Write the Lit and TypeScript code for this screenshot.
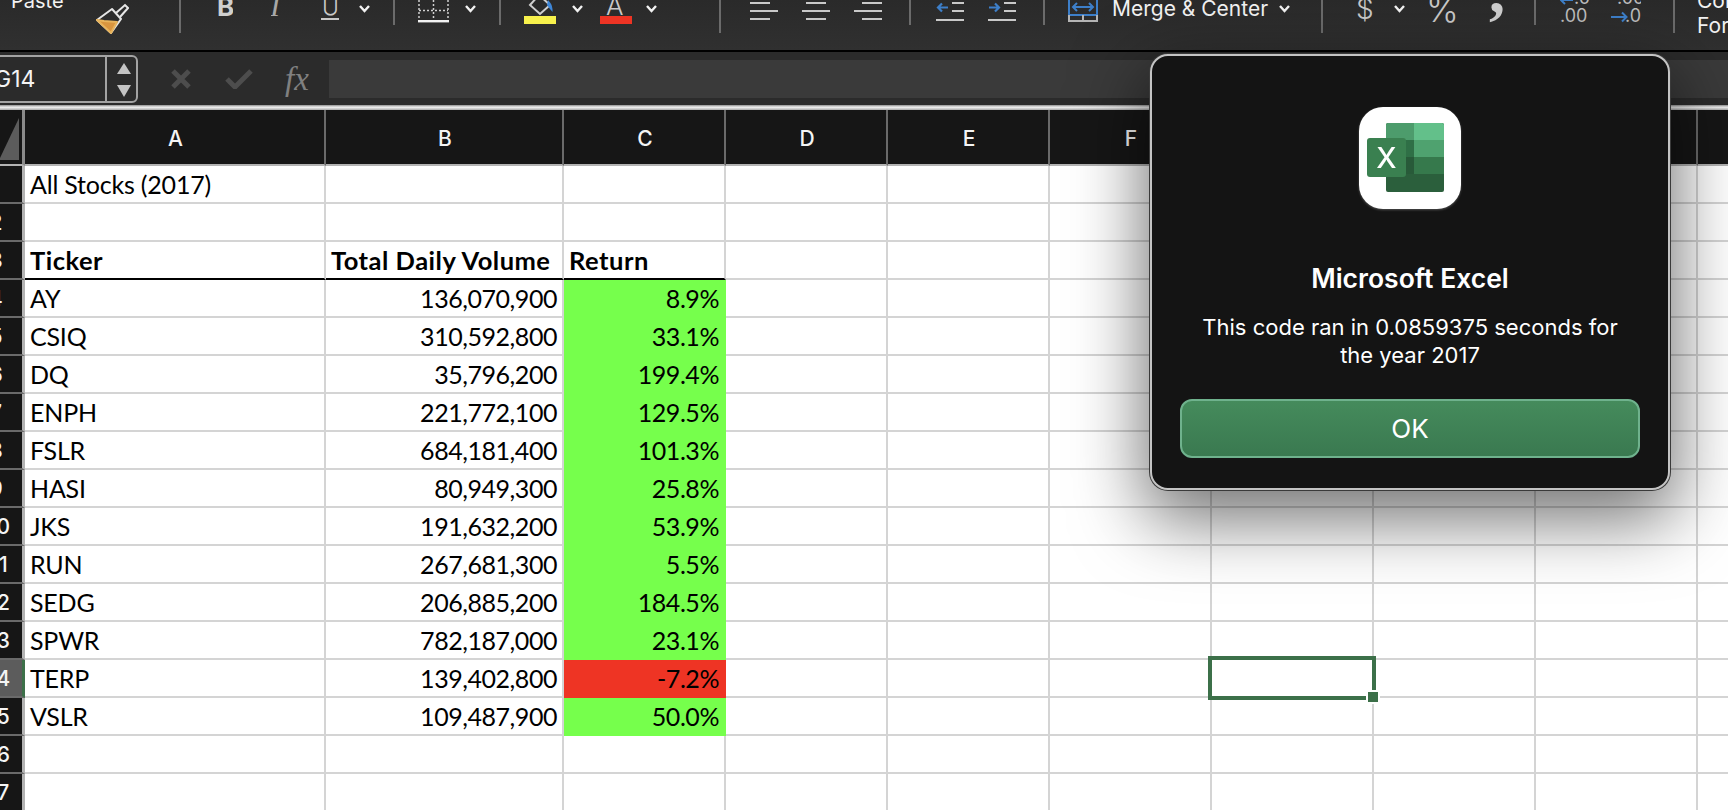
import { LitElement, html, css, svg } from "lit";
import { customElement } from "lit/decorators.js";

const COLS = ["A", "B", "C", "D", "E", "F", "G", "H", "I", "J"];
const ROW_COUNT = 17;

type Stock = [string, string, string];
const STOCKS: Stock[] = [
  ["AY", "136,070,900", "8.9%"],
  ["CSIQ", "310,592,800", "33.1%"],
  ["DQ", "35,796,200", "199.4%"],
  ["ENPH", "221,772,100", "129.5%"],
  ["FSLR", "684,181,400", "101.3%"],
  ["HASI", "80,949,300", "25.8%"],
  ["JKS", "191,632,200", "53.9%"],
  ["RUN", "267,681,300", "5.5%"],
  ["SEDG", "206,885,200", "184.5%"],
  ["SPWR", "782,187,000", "23.1%"],
  ["TERP", "139,402,800", "-7.2%"],
  ["VSLR", "109,487,900", "50.0%"],
];

// chevron drawn at the given x inside a toolbar icon
const chev = (x: number) =>
  svg`<polyline points="${x + 1},6 ${x + 5.5},11 ${x + 10},6" fill="none" stroke="#f2f2f2" stroke-width="2.4"/>`;

const lines = (xs: [number, number][]) =>
  xs.map(
    ([a, b], i) =>
      svg`<rect x="${a}" y="${2 + i * 8}" width="${b - a}" height="2" fill="#c9c9c9"/>`
  );

const indent = (flip: boolean) => svg`
  <svg class="icon" width="28" height="30">
    ${flip
      ? svg`<path d="M1 7.5H11M7 3.5L11 7.5L7 11.5" fill="none" stroke="#3d7fc9" stroke-width="2.2"/>`
      : svg`<path d="M12 7.5H2M6 3.5L2 7.5L6 11.5" fill="none" stroke="#3d7fc9" stroke-width="2.2"/>`}
    <rect x="16" y="2" width="12" height="2" fill="#c9c9c9"/>
    <rect x="16" y="10" width="12" height="2" fill="#c9c9c9"/>
    <rect y="19" width="28" height="2" fill="#c9c9c9"/>
  </svg>`;

@customElement("app-root")
export class AppRoot extends LitElement {
  static styles = css`
    :host {
      display: block;
      position: relative;
      width: 1728px;
      height: 810px;
      overflow: hidden;
      background: #fff;
      font-family: Inter, "Liberation Sans", sans-serif;
    }
    .icon {
      display: block;
      flex: none;
    }
    .icon text {
      font-family: Inter, "Liberation Sans", sans-serif;
    }
    .icon text.serif {
      font-family: "Liberation Serif", serif;
    }

    .toolbar {
      display: flex;
      align-items: flex-start;
      height: 50px;
      overflow: hidden;
      background: linear-gradient(#2a2a2a, #303030);
      border-bottom: 2px solid #000;
    }
    .group {
      display: flex;
      align-items: flex-start;
      flex: none;
      box-sizing: border-box;
    }
    .g1 { width: 179px; padding-left: 11px; gap: 31px; }
    .g2 { width: 212px; padding-left: 36px; gap: 38px; }
    .g3 { width: 104px; padding-left: 23px; }
    .g4 { width: 218px; padding-left: 23px; gap: 17px; }
    .g5 { width: 188px; padding-left: 29px; gap: 24px; }
    .g6 { width: 132px; padding-left: 25px; gap: 24px; }
    .g7 { width: 276px; padding-left: 23px; gap: 14px; }
    .g8 { width: 211px; padding-left: 33px; gap: 19px; }
    .g9 { width: 137px; padding-left: 24px; gap: 21px; }
    .g10 { width: 53px; padding-left: 22px; }
    .sep {
      flex: none;
      width: 2px;
      height: 33px;
      background: #6b6b6b;
    }
    .sep.short { height: 25px; }
    .label {
      color: #f2f2f2;
      font-size: 21px;
      line-height: 24px;
      white-space: nowrap;
    }
    .paste {
      width: 54px;
      margin-top: -11px;
      font-size: 20px;
    }
    .merge {
      display: flex;
      gap: 11px;
      margin-top: -3px;
    }
    .merge .icon { margin-top: 3px; }
    .cond {
      margin-top: -12px;
      line-height: 25px;
    }

    .formula {
      display: flex;
      align-items: center;
      height: 53px;
      background: #2b2b2b;
    }
    .namebox {
      display: flex;
      flex: none;
      box-sizing: border-box;
      width: 150px;
      height: 48px;
      margin-left: -12px;
      border: 2px solid #a3a3a3;
      border-radius: 6px;
      color: #f4f4f4;
      font-size: 23px;
      line-height: 44px;
    }
    .ref {
      flex: 1;
      padding-left: 4px;
    }
    .spin {
      display: flex;
      flex-direction: column;
      align-items: center;
      justify-content: space-between;
      box-sizing: border-box;
      width: 31px;
      padding: 6px 0 4px 4px;
      border-left: 2px solid #a3a3a3;
    }
    .actions {
      display: flex;
      align-items: center;
      flex: none;
      margin-left: 33px;
      margin-right: 15px;
      gap: 34px;
    }
    .fx {
      width: 29px;
      margin-left: -2px;
      color: #808080;
      font: italic 33px/40px "Liberation Serif", serif;
    }
    .input {
      flex: 1;
      height: 38px;
      background: #3a3a3a;
    }
    .rule {
      height: 5px;
      background: linear-gradient(#8f8f8f, #f0f0f0 45%, #a8a8a8);
    }

    .row {
      display: flex;
      width: max-content;
      height: 38px;
    }
    .row.head {
      height: 56px;
    }
    .rownum {
      display: flex;
      align-items: center;
      justify-content: center;
      flex: none;
      box-sizing: border-box;
      width: 52px;
      margin-left: -27px;
      padding-right: 3px;
      background: #161616;
      border-right: 3px solid #b3b3b3;
      border-bottom: 2px solid #6a6a6a;
      color: #f4f4f4;
      font-size: 21px;
      font-weight: 500;
    }
    .rownum.wide {
      padding-left: 6px;
    }
    .rownum.sel {
      background: #5c5c5c;
      border-right-color: #3c7049;
    }
    .corner {
      align-items: flex-end;
      justify-content: flex-end;
      padding: 0 3px 4px 0;
      border-right-color: #8a8a8a;
      border-bottom-color: #b3b3b3;
    }
    .colhead {
      display: flex;
      align-items: center;
      justify-content: center;
      flex: none;
      box-sizing: border-box;
      padding: 3px 0 0 2px;
      background: #161616;
      border-right: 2px solid #6a6a6a;
      border-bottom: 2px solid #b3b3b3;
      color: #f4f4f4;
      font-size: 21px;
      font-weight: 500;
    }
    .cell {
      flex: none;
      box-sizing: border-box;
      padding: 0 5px;
      border-right: 2px solid #d4d4d4;
      border-bottom: 2px solid #d4d4d4;
      color: #000;
      font: 25px/36px Lato, "Liberation Sans", sans-serif;
      letter-spacing: -0.2px;
      white-space: nowrap;
    }
    .w-a { width: 301px; }
    .w-b { width: 238px; }
    .w-n { width: 162px; }
    .cell.bold {
      font-size: 25.500px;
      font-weight: 700;
      letter-spacing: 0.5px;
    }
    .cell.num {
      text-align: right;
      letter-spacing: -0.45px;
    }
    .cell.under { border-bottom-color: #000; }
    .cell.up { background: #76ff4c; border-color: #76ff4c; }
    .cell.down { background: #ee3424; border-color: #ee3424; }
    .cell.active {
      position: relative;
      z-index: 1;
    }
    .selection {
      position: absolute;
      inset: -4px;
      border: 4px solid #3c7049;
    }
    .handle {
      position: absolute;
      right: -6px;
      bottom: -6px;
      width: 10px;
      height: 10px;
      background: #3c7049;
      box-shadow: 0 0 0 2px #fff;
    }

    .dialog {
      position: absolute;
      z-index: 2;
      left: 1150px;
      top: 54px;
      display: flex;
      flex-direction: column;
      align-items: center;
      box-sizing: border-box;
      width: 520px;
      height: 436px;
      padding: 51px 28px 0;
      background: #141414;
      border: 2px solid #c4c4c4;
      border-radius: 18px;
      box-shadow: 0 0 0 1px #3a3a3a, 0 24px 70px 6px rgba(0, 0, 0, 0.55);
      color: #fff;
      text-align: center;
    }
    .app-icon {
      display: block;
      flex: none;
      filter: drop-shadow(0 1px 1px rgba(255, 255, 255, 0.25));
    }
    .app-icon text {
      font-family: Inter, "Liberation Sans", sans-serif;
    }
    .title {
      margin-top: 53px;
      font-size: 26.500px;
      font-weight: 600;
      line-height: 32px;
    }
    .body {
      width: 430px;
      margin-top: 19px;
      font-size: 22px;
      line-height: 28px;
    }
    .ok {
      box-sizing: border-box;
      width: 100%;
      height: 59px;
      margin-top: 30px;
      background: linear-gradient(#458b5c, #3a7950);
      border: 2px solid #6fb28d;
      border-radius: 12px;
      color: #fff;
      font: 26px Inter, "Liberation Sans", sans-serif;
    }
  `;

  private toolbar() {
    return html`<div class="toolbar">
      <div class="group g1">
        <span class="label paste">Paste</span>
        <svg class="icon" width="33" height="34">
          <path d="M20 13L29 5L32 8L24 17" fill="none" stroke="#e6e6e6" stroke-width="2"/>
          <path d="M16 9L25 19L15 33L1 20Z" fill="#2c2c2c" stroke="#e6e6e6" stroke-width="2" stroke-linejoin="round"/>
          <path d="M8 21L21 22L15 33L1 20Z" fill="#d9953f" stroke="#e8b45c" stroke-width="2" stroke-linejoin="round"/>
        </svg>
      </div>
      <div class="sep"></div>
      <div class="group g2">
        <svg class="icon" width="16" height="30">
          <text y="16" font-size="26" font-weight="700" fill="#cfcfcf">B</text>
        </svg>
        <svg class="icon" width="12" height="30">
          <text class="serif" x="-1" y="16" font-size="30" font-style="italic" fill="#a8a8a8">I</text>
        </svg>
        <svg class="icon" width="49" height="30">
          <text x="1" y="15" font-size="23" font-weight="300" fill="#c9c9c9">U</text>
          <rect x="0" y="18" width="18" height="2" fill="#c9c9c9"/>
          ${chev(38)}
        </svg>
      </div>
      <div class="sep short"></div>
      <div class="group g3">
        <svg class="icon" width="58" height="30">
          <path d="M1 0V20M30 0V20M15.500 0V20M1 10.500H30" fill="none" stroke="#d0d0d0" stroke-width="1.500" stroke-dasharray="2 2"/>
          <rect y="20" width="31" height="2.400" fill="#f2f2f2"/>
          ${chev(47)}
        </svg>
      </div>
      <div class="sep short"></div>
      <div class="group g4">
        <svg class="icon" width="59" height="30">
          <path d="M15 -5L26 5L16 14L6 5Z" fill="none" stroke="#cfcfcf" stroke-width="2"/>
          <path d="M24 0Q29 5 28.500 12Q25 8 23 5Z" fill="#3d86d8"/>
          <rect y="16" width="32" height="8" fill="#f7f14c"/>
          ${chev(48)}
        </svg>
        <svg class="icon" width="58" height="30">
          <text x="6" y="15" font-size="26" font-weight="300" fill="#c9c9c9">A</text>
          <rect y="16" width="32" height="8" fill="#ee3424"/>
          ${chev(46)}
        </svg>
      </div>
      <div class="sep"></div>
      <div class="group g5">
        <svg class="icon" width="28" height="30">${lines([[0, 20], [0, 28], [0, 20]])}</svg>
        <svg class="icon" width="28" height="30">${lines([[4, 24], [0, 28], [4, 24]])}</svg>
        <svg class="icon" width="28" height="30">${lines([[8, 28], [0, 28], [8, 28]])}</svg>
      </div>
      <div class="sep short"></div>
      <div class="group g6">${indent(false)}${indent(true)}</div>
      <div class="sep short"></div>
      <div class="group g7">
        <svg class="icon" width="30" height="30">
          <path d="M1 -3H29V15H1Z" fill="none" stroke="#3d7fc9" stroke-width="2"/>
          <path d="M5 7H25M9 3L5 7L9 11M21 3L25 7L21 11" fill="none" stroke="#3d7fc9" stroke-width="2"/>
          <path d="M1 15V21H29V15M15 15V21" fill="none" stroke="#b5b5b5" stroke-width="2"/>
        </svg>
        <div class="merge">
          <span class="label">Merge &amp; Center</span>
          <svg class="icon" width="12" height="30">${chev(0)}</svg>
        </div>
      </div>
      <div class="sep"></div>
      <div class="group g8">
        <svg class="icon" width="51" height="30">
          <text x="0" y="19" font-size="28" font-weight="300" fill="#c9c9c9">$</text>
          ${chev(38)}
        </svg>
        <svg class="icon" width="43" height="30">
          <text y="22" font-size="35" font-weight="300" fill="#c9c9c9">%</text>
        </svg>
        <svg class="icon" width="16" height="30">
          <text class="serif" x="1" y="12" font-size="64" font-weight="700" fill="#cfcfcf">,</text>
        </svg>
      </div>
      <div class="sep short"></div>
      <div class="group g9">
        <svg class="icon" width="30" height="30">
          <path d="M13 0H1M5 -3L1 0L5 4" fill="none" stroke="#3d7fc9" stroke-width="2"/>
          <text x="14" y="4" font-size="18" fill="#bdbdbd">.0</text>
          <text x="0" y="22" font-size="18" fill="#bdbdbd">.00</text>
        </svg>
        <svg class="icon" width="30" height="30">
          <text x="6" y="4" font-size="18" fill="#bdbdbd">.00</text>
          <path d="M0 17H15M11 12.500L15.500 17L11 21.500" fill="none" stroke="#3d7fc9" stroke-width="2"/>
          <text x="14" y="22" font-size="18" fill="#bdbdbd">.0</text>
        </svg>
      </div>
      <div class="sep"></div>
      <div class="group g10">
        <div class="label cond">Cond<br />Form</div>
      </div>
    </div>`;
  }

  private formulaBar() {
    return html`<div class="formula">
        <div class="namebox">
          <span class="ref">G14</span>
          <div class="spin">
            <svg class="icon" width="14" height="11"><path d="M7 0L14 11H0Z" fill="#c4c4c4"/></svg>
            <svg class="icon" width="14" height="12"><path d="M7 12L14 0H0Z" fill="#c4c4c4"/></svg>
          </div>
        </div>
        <div class="actions">
          <svg class="icon" width="20" height="20"><path d="M2 2L18 18M18 2L2 18" stroke="#4d4d4d" stroke-width="5"/></svg>
          <svg class="icon" width="28" height="20"><path d="M2 10L10 18L26 2" fill="none" stroke="#4d4d4d" stroke-width="5"/></svg>
          <span class="fx">fx</span>
        </div>
        <div class="input"></div>
      </div>
      <div class="rule"></div>`;
  }

  private cellWidth(i: number) {
    return i === 0 ? "w-a" : i === 1 ? "w-b" : "w-n";
  }

  private gridRow(n: number) {
    const stock = n >= 4 && n <= 15 ? STOCKS[n - 4] : null;
    return html`<div class="row">
      <div class="rownum ${n === 14 ? "sel" : ""} ${n >= 10 ? "wide" : ""}">${n}</div>
      ${COLS.map((col, i) => {
        const cls = [`cell`, this.cellWidth(i)];
        let text = "";
        if (n === 1 && i === 0) text = "All Stocks (2017)";
        if (n === 3 && i < 3) {
          text = ["Ticker", "Total Daily Volume", "Return"][i];
          cls.push("bold", "under");
        }
        if (stock && i < 3) {
          text = stock[i];
          if (i > 0) cls.push("num");
          if (i === 2) cls.push(text.startsWith("-") ? "down" : "up");
        }
        const selected = col === "G" && n === 14;
        if (selected) cls.push("active");
        return html`<div class=${cls.join(" ")}>
          ${text}${selected
            ? html`<div class="selection"><div class="handle"></div></div>`
            : ""}
        </div>`;
      })}
    </div>`;
  }

  private grid() {
    const rows = Array.from({ length: ROW_COUNT }, (_, i) => i + 1);
    return html`<div class="row head">
        <div class="rownum corner">
          <svg class="icon" width="20" height="42"><path d="M20 0V42H0Z" fill="#5c5c5c"/></svg>
        </div>
        ${COLS.map(
          (col, i) => html`<div class="colhead ${this.cellWidth(i)}">${col}</div>`
        )}
      </div>
      ${rows.map((n) => this.gridRow(n))}`;
  }

  private dialog() {
    return html`<div class="dialog">
      <svg class="app-icon" width="102" height="102" viewBox="0 0 102 102">
        <rect width="102" height="102" rx="24" fill="#fff"/>
        <rect x="27" y="16" width="58" height="69" rx="2" fill="#2b5f3c"/>
        <path d="M27 18a2 2 0 0 1 2-2H55V33H27Z" fill="#4d9c6c"/>
        <path d="M55 16H83a2 2 0 0 1 2 2V33H55Z" fill="#63c08a"/>
        <rect x="27" y="33" width="28" height="17" fill="#2f6f46"/>
        <rect x="55" y="33" width="30" height="17" fill="#4fa26f"/>
        <rect x="27" y="50" width="28" height="17" fill="#285a39"/>
        <rect x="55" y="50" width="30" height="17" fill="#36794c"/>
        <rect x="8" y="31" width="39" height="39" rx="3" fill="#3a8050"/>
        <text x="27.500" y="61" text-anchor="middle" font-size="29" font-weight="500" fill="#fff">X</text>
      </svg>
      <div class="title">Microsoft Excel</div>
      <div class="body">This code ran in 0.0859375 seconds for the year 2017</div>
      <button class="ok">OK</button>
    </div>`;
  }

  render() {
    return html`${this.toolbar()}${this.formulaBar()}${this.grid()}${this.dialog()}`;
  }
}
